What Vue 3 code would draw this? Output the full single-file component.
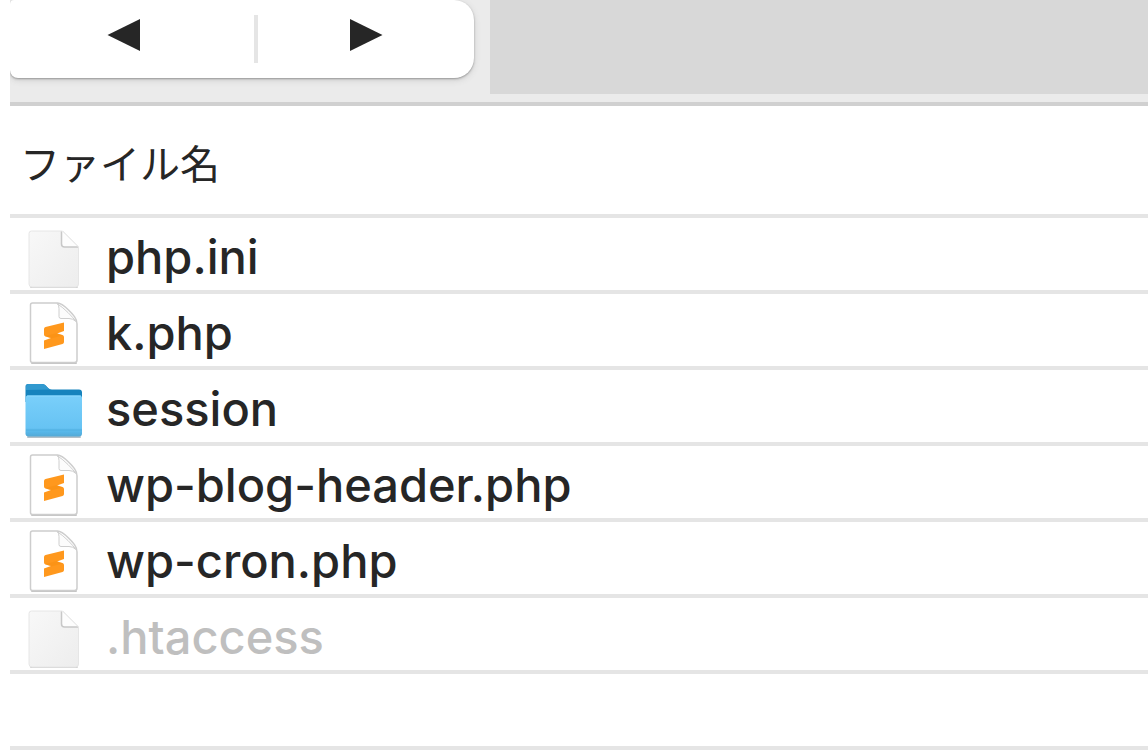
<script setup>
const files = [
  { name: 'php.ini', kind: 'plain' },
  { name: 'k.php', kind: 'code' },
  { name: 'session', kind: 'folder' },
  { name: 'wp-blog-header.php', kind: 'code' },
  { name: 'wp-cron.php', kind: 'code' },
  { name: '.htaccess', kind: 'plain', hidden: true }
]
</script>

<template>
  <main class="browser">
    <header class="toolbar">
      <nav class="history">
        <button type="button" class="nav-button back" aria-label="戻る">
          <svg width="34" height="34" viewBox="0 0 34 34" aria-hidden="true"><path d="M0.5 17 33 1v32z" fill="#262626" /></svg>
        </button>
        <span class="divider"></span>
        <button type="button" class="nav-button" aria-label="進む">
          <svg width="34" height="34" viewBox="0 0 34 34" aria-hidden="true"><path d="M33.5 17 1 1v32z" fill="#262626" /></svg>
        </button>
      </nav>
      <div class="path-area"></div>
    </header>

    <table class="files">
      <thead>
        <tr><th scope="col">ファイル名</th></tr>
      </thead>
      <tbody>
        <tr v-for="file in files" :key="file.name">
          <td>
            <div class="entry" :class="{ hidden: file.hidden }">
              <svg v-if="file.kind === 'plain'" class="icon" viewBox="0 0 64 72" aria-hidden="true">
                <defs>
                  <linearGradient :id="'page-' + file.name" x1="0" y1="0" x2="1" y2="1">
                    <stop offset="0" stop-color="#f8f8f8" /><stop offset="1" stop-color="#ededed" />
                  </linearGradient>
                </defs>
                <path d="M9 69h46" stroke="#d2d2d2" stroke-width="2" stroke-linecap="round" />
                <path d="M9.500 13h31l16 16V66q0 3-3 3H10q-3 0-3-3V15.500q0-2.500 2.500-2.500z" :fill="`url(#page-${file.name})`" stroke="#e6e6e6" />
                <path d="M40 13v12.500q0 3.500 3.500 3.500h13z" fill="#fdfdfd" />
                <path d="M39.500 13.500v12.500q0 3 3 3h13.500" fill="none" stroke="#c8c8c8" stroke-width="1.500" />
                <path d="M40.500 13 56.500 29" stroke="#e7e7e7" />
              </svg>
              <svg v-else-if="file.kind === 'code'" class="icon" viewBox="0 0 64 72" aria-hidden="true">
                <path d="M10 69h44" stroke="#c4c4c4" stroke-width="2" stroke-linecap="round" />
                <path d="M10.500 9h25c4 0 7 3 11 7 5 5 8.500 8.500 8.500 14V66q0 2.500-2.500 2.500h-42q-2 0-2-2V11q0-2 2-2z" fill="#fff" stroke="#cdcdcd" stroke-width="1.500" />
                <path d="M35 9.500q2 1 2 5v8q0 2 2 2h8q4 0 7 3-3-4-8-9t-11-9z" fill="#fcfcfc" stroke="#cecece" />
                <path d="M22 35q0-1.500 1.500-2L42 28.500V37l-7 2.500 5.500 1.500q1.500.5 1.500 2V48q0 1.500-1.500 2L22 55v-8.500l7-2.500-5.500-1.500q-1.500-.5-1.500-2z" fill="#ff981d" />
                <path d="m23 42 12-3 6 2.500-12 3z" fill="#f58c0c" opacity=".4" />
              </svg>
              <svg v-else class="icon" viewBox="0 0 64 72" aria-hidden="true">
                <defs>
                  <linearGradient id="folder-front" x1="0" y1="0" x2="0" y2="1">
                    <stop offset="0" stop-color="#79cffa" /><stop offset=".78" stop-color="#67c3f3" /><stop offset=".9" stop-color="#56b5e7" /><stop offset="1" stop-color="#55a9d5" />
                  </linearGradient>
                </defs>
                <path d="M6 67h52" stroke="#8c9daa" stroke-width="2" stroke-linecap="round" opacity=".65" />
                <path d="M3.500 16.500q0-2.500 2.500-2.500H20c5 0 5 5.500 10 5.500h27q3 0 3 3V32h-56.500z" fill="#1683bd" />
                <path d="M4 20V16.500q0-2.500 2.500-2.500H20c4 0 5 5 9 5.500z" fill="#3199cf" />
                <path d="M3.500 28q0-2.500 2.500-2.500h51.500q2.500 0 2.500 2.500V63.500q0 3-3 3H6.500q-3 0-3-3z" fill="url(#folder-front)" />
                <path d="M4 60h56" stroke="#4faee0" />
                <path d="M5 26h54" stroke="#8cd9ff" />
              </svg>
              <span class="name">{{ file.name }}</span>
            </div>
          </td>
        </tr>
        <tr aria-hidden="true"><td><div class="entry"></div></td></tr>
      </tbody>
    </table>
  </main>
</template>

<style>
body {
  background: #fff;
  overflow: hidden;
}
</style>

<style scoped>
.browser {
  padding-left: 10px;
  color: #262626;
  font-family: Inter, "Liberation Sans", "Noto Sans CJK JP", sans-serif;
}
.toolbar {
  display: flex;
  align-items: flex-start;
  gap: 16px;
  height: 102px;
  background: #ebebeb;
  border-bottom: 4px solid #d0d0d0;
  overflow: hidden;
}
.history {
  display: flex;
  align-items: center;
  width: 464px;
  height: 78px;
  box-sizing: border-box;
  background: #fff;
  border-radius: 4px 20px 20px 8px;
  box-shadow: 0 1px 2px #999, 0 2px 6px #ccc;
}
.nav-button {
  display: flex;
  flex: 1;
  align-items: center;
  justify-content: center;
  height: 100%;
  margin: 0;
  padding: 0 0 8px;
  border: 0;
  background: none;
}
.nav-button.back {
  flex: 0 0 244px;
  padding-right: 16px;
}
.divider {
  width: 4px;
  height: 48px;
  background: #e5e5e5;
}
.path-area {
  flex: 1;
  height: 94px;
  background: #d8d8d8;
}
.files {
  width: 100%;
  border-spacing: 0;
}
th {
  height: 104px;
  padding: 4px 10px 0;
  border-bottom: 4px solid #e5e5e5;
  font-family: "Noto Sans CJK JP", sans-serif;
  font-size: 40px;
  font-weight: 400;
  line-height: 60px;
  text-align: left;
}
td {
  padding: 0;
  border-bottom: 4px solid #e5e5e5;
}
.entry {
  display: flex;
  align-items: center;
  gap: 20px;
  height: 72px;
  padding-left: 12px;
}
.icon {
  flex: none;
  width: 64px;
  height: 72px;
}
.name {
  padding-top: 6px;
  font-size: 47px;
  font-weight: 450;
  line-height: 60px;
  white-space: nowrap;
}
.hidden .name {
  color: #bfbfbf;
}
</style>
